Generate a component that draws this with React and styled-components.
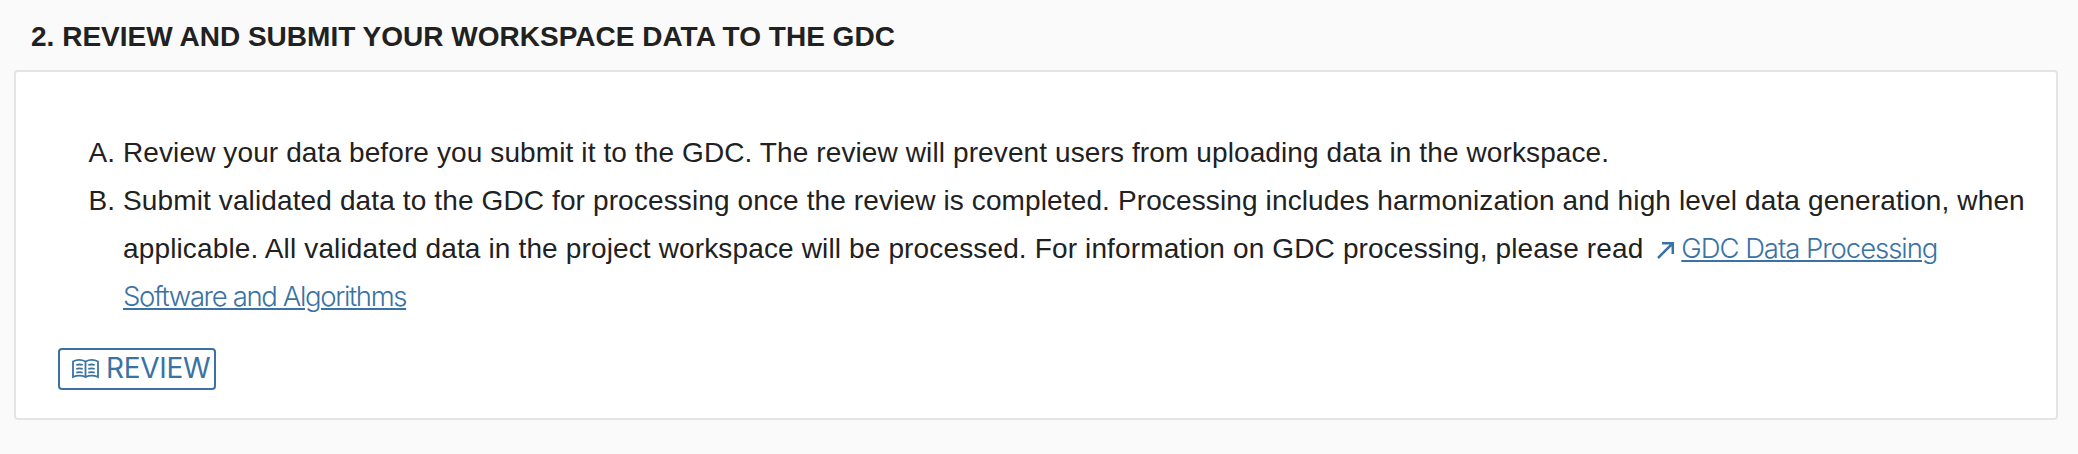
import React from "react";
import styled, { createGlobalStyle } from "styled-components";

const GlobalStyle = createGlobalStyle`
  * { box-sizing: border-box; }
  body {
    margin: 0;
    background: #fafafa;
    color: #212121;
    font-family: "Liberation Sans", Arial, sans-serif;
    font-size: 28px;
  }
`;

const Section = styled.section`
  display: flex;
  flex-direction: column;
  height: 454px;
  padding: 0 20px 34px 14px;
`;

const Heading = styled.h2`
  margin: 0;
  height: 70px;
  padding-left: 17px;
  font-size: 28px;
  font-weight: 700;
  line-height: 73px;
  letter-spacing: 0.01px;
  white-space: nowrap;
`;

const Panel = styled.div`
  flex: 1;
  display: flex;
  flex-direction: column;
  align-items: flex-start;
  padding: 57px 0 0 42px;
  background: #fff;
  border: 2px solid #e4e4e4;
  border-radius: 4px;
`;

const Steps = styled.ol`
  margin: 0;
  padding: 0;
  list-style: none;
`;

const Step = styled.li`
  display: grid;
  grid-template-columns: 57px 8px auto;
  line-height: 48px;
`;

const Marker = styled.span`
  grid-column: 1;
  text-align: right;
  white-space: nowrap;
`;

const Copy = styled.div`
  grid-column: 3;
`;

const Line = styled.div`
  height: 48px;
  white-space: nowrap;
  letter-spacing: ${(p) => p.$tracking || 0}px;
`;

const Link = styled.a`
  color: #3a72a5;
  font-family: Inter, sans-serif;
  font-weight: 300;
  font-size: 27.5px;
  line-height: 1;
  letter-spacing: ${(p) => p.$tracking || 0}px;
  text-decoration: underline;
  text-decoration-thickness: 2px;
  text-underline-offset: 2px;
`;

const ArrowIcon = styled.svg`
  width: 18px;
  height: 18px;
  margin: 0 6px 0 6px;
  color: #3a72a5;
  vertical-align: -1px;
`;

const ReviewButton = styled.button`
  display: flex;
  align-items: center;
  width: 158px;
  height: 42px;
  margin-top: 27px;
  padding: 0 0 0 12px;
  border: 2px solid #3a72a5;
  border-radius: 4px;
  background: #fff;
  color: #3a72a5;
  font: 370 28px/36px Inter, sans-serif;
  letter-spacing: -0.3px;
  white-space: nowrap;
`;

const ButtonLabel = styled.span`
  padding-bottom: 2px;
`;

const BookIcon = styled.svg`
  flex: none;
  width: 27px;
  height: 20px;
  margin-right: 7px;
`;

export default function App() {
  return (
    <>
      <GlobalStyle />
      <Section>
        <Heading>2. REVIEW AND SUBMIT YOUR WORKSPACE DATA TO THE GDC</Heading>
        <Panel>
          <Steps>
            <Step>
              <Marker>A.</Marker>
              <Copy>
                <Line $tracking={0.11}>Review your data before you submit it to the GDC. The review will prevent users from uploading data in the workspace.</Line>
              </Copy>
            </Step>
            <Step>
              <Marker>B.</Marker>
              <Copy>
                <Line $tracking={0.125}>Submit validated data to the GDC for processing once the review is completed. Processing includes harmonization and high level data generation, when</Line>
                <Line $tracking={0.14}>
                  applicable. All validated data in the project workspace will be processed. For information on GDC processing, please read{" "}
                  <ArrowIcon viewBox="0 0 18 18" fill="none" stroke="currentColor" strokeWidth="2.5">
                    <path d="M1 17 16 2M5 2.2H15.8V13" />
                  </ArrowIcon>
                  <Link $tracking={-1.05}>GDC Data Processing</Link>
                </Line>
                <Line>
                  <Link $tracking={-1.36}>Software and Algorithms</Link>
                </Line>
              </Copy>
            </Step>
          </Steps>
          <ReviewButton>
            <BookIcon viewBox="0 0 27 20" fill="none" stroke="currentColor" strokeWidth="1.8">
              <path d="M1 2.5C5 .5 9.5 .5 13.5 2.5V18C9.5 16.2 5 16.2 1 18ZM13.5 2.5C17.5 .5 22 .5 26 2.5V18C22 16.2 17.5 16.2 13.5 18M4.3 6Q7.5 5 10.7 6M4.3 9.8Q7.5 8.8 10.7 9.8M4.3 13.6Q7.5 12.6 10.7 13.6M16.3 6Q19.5 5 22.7 6M16.3 9.8Q19.5 8.8 22.7 9.8M16.3 13.6Q19.5 12.6 22.7 13.6" />
            </BookIcon>
            <ButtonLabel>REVIEW</ButtonLabel>
          </ReviewButton>
        </Panel>
      </Section>
    </>
  );
}
